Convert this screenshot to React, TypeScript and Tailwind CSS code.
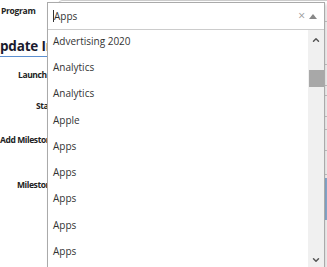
import { ChevronDown, ChevronUp } from "lucide-react";

const options = [
  "Advertising 2020",
  "Analytics",
  "Analytics",
  "Apple",
  "Apps",
  "Apps",
  "Apps",
  "Apps",
  "Apps",
  "Apps",
];

function FormRow({ label, h, pl }: { label: string; h: string; pl: string }) {
  return (
    <div className={`flex items-center ${h}`}>
      <div className={`w-[90px] shrink-0 whitespace-nowrap text-[8.5px] font-bold tracking-[-0.4px] text-[#222] ${pl}`}>
        {label}
      </div>
      <div className="ml-3 h-[22px] flex-1 rounded-sm border border-[#ccc] bg-white" />
    </div>
  );
}

export default function App() {
  return (
    <div className="relative h-[267px] w-[327px] overflow-hidden bg-white font-['Open_Sans',sans-serif]">
      {/* form behind the open dropdown */}
      <div className="w-[380px]">
        <div className="flex h-[22px] items-center">
          <div className="w-[46px] pl-[1px] text-[8.5px] font-bold tracking-[-0.3px] text-[#222]">Program</div>
          <div className="ml-3 h-[22px] flex-1 rounded-sm border border-[#ccc]" />
        </div>
        <div className="ml-[-10px] mt-[14px] h-[21px] w-[57px] border-b border-[#5b8fd0]">
          <div className="w-[180px] text-[13.5px] font-bold leading-[20px] tracking-[-0.2px] text-[#1a1a2e]">
            Update Information
          </div>
        </div>
        <FormRow label="Launch Date" h="h-[32px] mt-[2px]" pl="pl-[18px]" />
        <FormRow label="Start Date" h="h-[30px]" pl="pl-[36px]" />
        <FormRow label="Add Milestone" h="h-[38px]" pl="pl-0" />
        <FormRow label="Milestone Date" h="h-[52px]" pl="pl-[17px]" />
      </div>

      {/* blue strip peeking out at far right */}
      <div className="absolute right-0 top-[178px] h-[42px] w-[2px] bg-[#8fb3d9]" />

      {/* opened select */}
      <div className="absolute left-[47px] top-[2px] w-[278px] border border-[#aaa] bg-white shadow-[2px_2px_3px_rgba(0,0,0,0.15)]">
        <div className="flex h-[27px] items-center border-b border-[#ccc] pl-[5px] pr-[7px]">
          <span className="h-[12px] w-px bg-[#333]" />
          <span className="flex-1 text-[10px] text-[#333]">Apps</span>
          <span className="mr-[1px] text-[12px] leading-none text-[#999]">×</span>
          <svg width="8" height="5" viewBox="0 0 8 5" className="ml-[3px]">
            <path d="M0 5 L4 0 L8 5 Z" fill="#888" />
          </svg>
        </div>
        <div className="flex h-[238px]">
          <ul className="flex-1 overflow-hidden">
            {options.map((o, i) => (
              <li key={i} className="flex h-[26.3px] items-center pb-[4px] pl-[5px] text-[10px] text-[#333]">
                {o}
              </li>
            ))}
          </ul>
          <div className="flex w-[16px] flex-col items-center bg-[#f0f0f0]">
            <ChevronUp size={10} strokeWidth={3.5} className="mt-[5px] text-[#555]" />
            <div className="mt-[25px] h-[17px] w-[15px] bg-[#a8a8a8]" />
            <div className="flex-1" />
            <ChevronDown size={10} strokeWidth={3.5} className="mb-[3px] text-[#555]" />
          </div>
        </div>
      </div>
    </div>
  );
}
